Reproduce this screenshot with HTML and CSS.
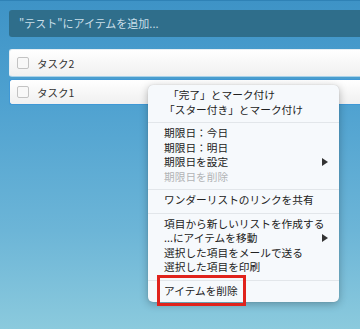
FILE: index.html
```html
<!DOCTYPE html>
<html lang="ja">
<head>
<meta charset="utf-8">
<link rel="stylesheet" href="styles.css">
</head>
<body>
<div class="app">
  <div class="add-input">"テスト"にアイテムを追加...</div>
  <div class="tasks">
    <div class="task"><span class="check"></span><span class="title">タスク2</span></div>
    <div class="task selected"><span class="check"></span><span class="title">タスク1</span></div>
  </div>
</div>
<div class="menu">
  <div class="item indent">「完了」とマーク付け</div>
  <div class="item">「スター付き」とマーク付け</div>
  <div class="sep"></div>
  <div class="item">期限日：今日</div>
  <div class="item">期限日：明日</div>
  <div class="item sub">期限日を設定<svg class="arrow" width="6" height="8" viewBox="0 0 6 8"><polygon points="0,0 6,4 0,8" fill="#333"/></svg></div>
  <div class="item disabled">期限日を削除</div>
  <div class="sep"></div>
  <div class="item">ワンダーリストのリンクを共有</div>
  <div class="sep"></div>
  <div class="item">項目から新しいリストを作成する</div>
  <div class="item sub">...にアイテムを移動<svg class="arrow" width="6" height="8" viewBox="0 0 6 8"><polygon points="0,0 6,4 0,8" fill="#333"/></svg></div>
  <div class="item">選択した項目をメールで送る</div>
  <div class="item">選択した項目を印刷</div>
  <div class="sep"></div>
  <div class="item highlight"><span class="mark">アイテムを削除</span></div>
</div>
</body>
</html>
```
FILE: styles.css
```css
html, body {
  margin: 0;
  padding: 0;
}
body {
  width: 360px;
  height: 329px;
  overflow: hidden;
  position: relative;
  font-family: "Noto Sans CJK JP", "Noto Sans", sans-serif;
  background: linear-gradient(to bottom, #3e93c6 0%, #4ea1d0 30%, #6cb5d7 70%, #8bcadd 100%);
  border-top: 1px solid #2f82b6;
  box-sizing: border-box;
}
.app {
  padding: 9px 0 0 9px;
}
.add-input {
  height: 27px;
  background: #2f6e8b;
  border-radius: 3px 0 0 3px;
  color: #c9dee8;
  font-size: 11px;
  line-height: 27px;
  padding-left: 10px;
}
.tasks {
  margin-top: 12px;
  display: flex;
  flex-direction: column;
  gap: 2px;
}
.task {
  height: 28px;
  box-sizing: border-box;
  background: linear-gradient(to bottom, #ffffff, #f0f0f0);
  border-radius: 3px 0 0 3px;
  border: 1px solid #e6eef3;
  border-right: none;
  border-bottom-color: #a9d2ea;
  display: flex;
  align-items: center;
  padding-left: 7px;
}
.task.selected {
  height: 26px;
  border: 1px solid #3f98d6;
  border-right: none;
}
.check {
  width: 12px;
  height: 12px;
  box-sizing: border-box;
  border: 1px solid #c3c3c3;
  border-radius: 2px;
  background: #f8f8f8;
}
.title {
  margin-left: 8px;
  font-size: 10.5px;
  color: #333;
}
.menu {
  position: absolute;
  left: 148px;
  top: 84px;
  width: 191px;
  background: #f6f9fc;
  border-radius: 5px;
  box-shadow: 0 2px 8px rgba(0, 0, 0, 0.28), 0 0 1px rgba(0, 0, 0, 0.2);
  padding: 3px 0 4px;
  font-size: 10.7px;
  line-height: 14.5px;
  color: #222;
}
.item {
  padding-left: 16px;
  padding-right: 11px;
  height: 14.5px;
  display: flex;
  align-items: center;
  justify-content: space-between;
  white-space: nowrap;
}
.item.indent {
  padding-left: 20px;
}
.item.disabled {
  color: #b2b4b6;
}
.arrow {
  display: block;
}
.sep {
  height: 1px;
  background: #e2e6ea;
  margin: 5px 0 3px;
}
.mark {
  position: relative;
}
.mark::after {
  content: "";
  position: absolute;
  left: -7px;
  right: -8px;
  top: -9px;
  bottom: -8px;
  border: 3px solid #e0231c;
}
```
